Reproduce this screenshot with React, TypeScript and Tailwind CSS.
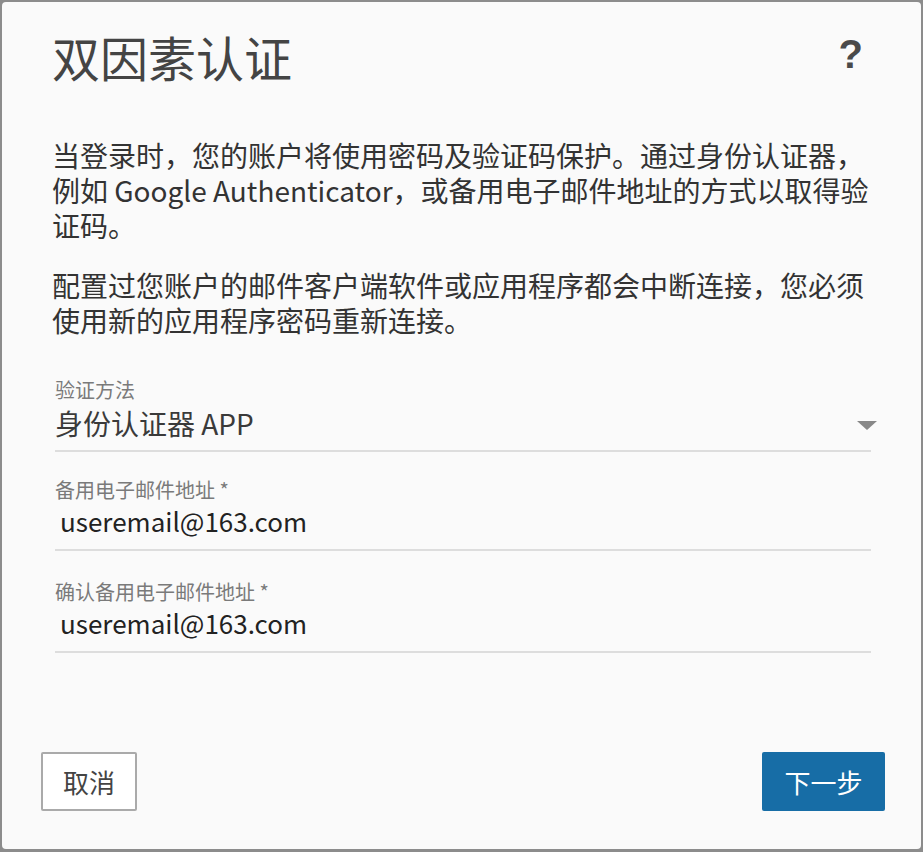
import React from "react";

const FONT = "font-['Noto_Sans_CJK_SC','Noto_Sans',sans-serif]";

function Field({
  label,
  value,
  select,
  className = "",
}: {
  label: string;
  value: string;
  select?: boolean;
  className?: string;
}) {
  if (select) {
    return (
      <div className={`border-b-2 border-[#dddddd] pb-[9px] ${className}`}>
        <div className="text-[20px] leading-[24px] text-[#7a7a7a]">{label}</div>
        <div className="mt-[4px] flex items-center justify-between">
          <span className="text-[28px] leading-[35px] text-[#3a3a3a]">{value}</span>
          <span className="mr-[-6px] mt-[4px] h-0 w-0 border-x-[10px] border-t-[9px] border-x-transparent border-t-[#888888]" />
        </div>
      </div>
    );
  }
  return (
    <div className={`border-b-2 border-[#dddddd] pb-[13px] pt-[2px] ${className}`}>
      <div className="text-[20px] leading-[22px] text-[#7a7a7a]">{label}</div>
      <div className="mt-[4px] pl-[5px] text-[26px] leading-[31px] text-[#222222]">{value}</div>
    </div>
  );
}

export default function App() {
  return (
    <div className={`${FONT} min-h-screen w-full bg-[#8c8c8c] pt-[2px] pl-[2px]`}>
      <div className="flex h-[847px] w-[919px] flex-col rounded-[4px] bg-[#fafafa]">
        {/* Header */}
        <div className="flex items-start justify-between px-[50px] pt-[26px]">
          <h1 className="text-[48px] leading-[1.2] font-normal text-[#444444]">双因素认证</h1>
          <span className="mr-[8px] mt-[2px] font-['Liberation_Sans',sans-serif] text-[40px] leading-[1.2] font-bold text-[#4a4a4a]">
            ?
          </span>
        </div>

        {/* Body */}
        <div className="px-[50px] pt-[52px] text-[28px] leading-[35px] text-[#333333]">
          <p>
            当登录时，您的账户将使用密码及验证码保护。通过身份认证器，例如 Google
            Authenticator，或备用电子邮件地址的方式以取得验证码。
          </p>
          <p className="mt-[25px]">
            配置过您账户的邮件客户端软件或应用程序都会中断连接，您必须使用新的应用程序密码重新连接。
          </p>
        </div>

        {/* Form */}
        <div className="ml-[53px] mr-[50px] mt-[40px] flex flex-col gap-[25px]">
          <Field label="验证方法" value="身份认证器 APP" select />
          <Field label="备用电子邮件地址 *" value="useremail@163.com" />
          <Field label="确认备用电子邮件地址 *" value="useremail@163.com" className="mt-[3px]" />
        </div>

        {/* Footer */}
        <div className="mt-auto flex items-center justify-between pb-[38px] pl-[39px] pr-[36px]">
          <button className="h-[59px] w-[96px] rounded-[2px] border-2 border-[#aaaaaa] bg-white text-[26px] text-[#444444]">
            取消
          </button>
          <button className="h-[59px] w-[123px] rounded-[2px] bg-[#176da6] text-[26px] text-white">
            下一步
          </button>
        </div>
      </div>
    </div>
  );
}
